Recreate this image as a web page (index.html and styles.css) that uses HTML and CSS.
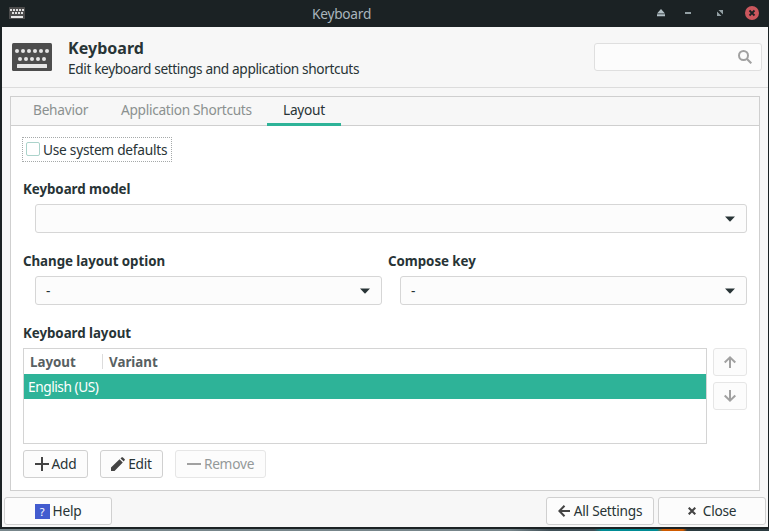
FILE: index.html
```html
<!DOCTYPE html>
<html lang="en">
<head>
<meta charset="utf-8">
<title>Keyboard</title>
<link rel="stylesheet" href="styles.css">
</head>
<body>
<div class="window">
  <header class="titlebar">
    <svg class="app-icon" width="16" height="12" viewBox="0 0 16 12"><rect width="16" height="12" rx="0.5" fill="#4d4d4d"/><path d="M1 3h14" stroke="#e0e0e0" stroke-width="2" stroke-dasharray="2 1"/><path d="M3 6h11" stroke="#e0e0e0" stroke-width="2" stroke-dasharray="2 1"/><path d="M2 10h12" stroke="#e8e8e8" stroke-width="2"/></svg>
    <div class="window-title"><span class="t-title">Keyboard</span></div>
    <div class="controls">
      <svg width="8" height="8" viewBox="0 0 8 8" fill="#b2c0c5"><path d="M4 0l4 4.5H0zM0 5.3h8v1.9H0z"/></svg>
      <svg width="6" height="8" viewBox="0 0 6 8" fill="#93a0a4"><path d="M0 3h6v2H0z"/></svg>
      <svg width="6" height="8" viewBox="0 0 6 8" fill="#93a0a4"><path d="M1.5 1H6v4.5zM0 2.5V7h4.5z"/></svg>
      <svg width="14" height="14" viewBox="0 0 14 14"><circle cx="7" cy="7" r="7" fill="#cb575d"/><path d="M4.5 4.5l5 5M9.5 4.5l-5 5" stroke="#1b2224" stroke-width="1.8"/></svg>
    </div>
  </header>
  <section class="heading">
    <svg width="40" height="28" viewBox="0 0 40 28"><rect width="40" height="28" rx="1.5" fill="#4d4d4d"/><g fill="#e6e6e6"><circle cx="5" cy="8" r="2"/><circle cx="11" cy="8" r="2"/><circle cx="17" cy="8" r="2"/><circle cx="23" cy="8" r="2"/><circle cx="29" cy="8" r="2"/><circle cx="35" cy="8" r="2"/><circle cx="8" cy="16" r="2"/><circle cx="14" cy="16" r="2"/><circle cx="20" cy="16" r="2"/><circle cx="26" cy="16" r="2"/><circle cx="32" cy="16" r="2"/><rect x="5" y="21" width="30" height="4" rx="0.5"/></g></svg>
    <div class="heading-text">
      <h1>Keyboard</h1>
      <p>Edit keyboard settings and application shortcuts</p>
    </div>
    <div class="search"><svg width="14" height="14" viewBox="0 0 14 14" fill="none" stroke="#a1a1a1"><circle cx="5.5" cy="5.5" r="4.5" stroke-width="2"/><path d="M9 9l4.3 4.3" stroke-width="2.1"/></svg></div>
  </section>
  <main class="notebook">
    <nav class="tabs">
      <div class="tab tab-behavior"><span>Behavior</span></div>
      <div class="tab tab-shortcuts"><span>Application Shortcuts</span></div>
      <div class="tab active"><span>Layout</span></div>
    </nav>
    <div class="page">
      <label class="defaults"><span class="box"></span><span>Use system defaults</span></label>
      <h2>Keyboard model</h2>
      <div class="combo indent"><span></span><svg width="10" height="6" viewBox="0 0 10 6"><path d="M0 0.5h10L5 5.8z" fill="#283436"/></svg></div>
      <div class="columns">
        <div class="column">
          <h2>Change layout option</h2>
          <div class="combo indent"><span>-</span><svg width="10" height="6" viewBox="0 0 10 6"><path d="M0 0.5h10L5 5.8z" fill="#283436"/></svg></div>
        </div>
        <div class="column">
          <h2>Compose key</h2>
          <div class="combo indent"><span>-</span><svg width="10" height="6" viewBox="0 0 10 6"><path d="M0 0.5h10L5 5.8z" fill="#283436"/></svg></div>
        </div>
      </div>
      <h2>Keyboard layout</h2>
      <div class="layouts">
        <div class="list">
          <div class="list-head"><span class="col-layout">Layout</span><span class="col-variant">Variant</span></div>
          <div class="list-row">English (US)</div>
        </div>
        <div class="order">
          <div class="button disabled"><svg width="12" height="12" viewBox="0 0 12 12" fill="none" stroke="#a1a1a1" stroke-width="2"><path d="M6 12V1.5M0.7 6.5L6 1.4l5.3 5.1"/></svg></div>
          <div class="button disabled"><svg width="12" height="12" viewBox="0 0 12 12" fill="none" stroke="#a1a1a1" stroke-width="2"><path d="M6 0v10.5M0.7 5.5L6 10.6l5.3-5.1"/></svg></div>
        </div>
      </div>
      <div class="actions">
        <div class="button add"><svg width="14" height="14" viewBox="0 0 14 14"><path d="M0 7h14M7 0v14" stroke="#444" stroke-width="2"/></svg><span>Add</span></div>
        <div class="button edit"><svg width="14" height="14" viewBox="0 0 14 14" fill="#444"><path d="M0 14v-3.5L8.5 2.3 11.8 5.6 3.5 14zM9.5 1.4L11 0Q12 0 14 2.5L12.8 4.6z"/></svg><span>Edit</span></div>
        <div class="button remove disabled"><svg width="14" height="14" viewBox="0 0 14 14"><path d="M0 7h14" stroke="#a1a1a1" stroke-width="2"/></svg><span>Remove</span></div>
      </div>
    </div>
  </main>
  <footer class="footer">
    <div class="button help"><span class="help-icon">?</span><span>Help</span></div>
    <div class="button all"><svg width="12" height="12" viewBox="0 0 12 12" fill="none" stroke="#444" stroke-width="2"><path d="M12 6H1.5M6.5 0.7L1.4 6l5.1 5.3"/></svg><span>All Settings</span></div>
    <div class="button close"><svg width="8" height="8" viewBox="0 0 8 8"><path d="M0.7 0.7l6.6 6.6M7.3 0.7L0.7 7.3" stroke="#444" stroke-width="2.1"/></svg><span>Close</span></div>
  </footer>
</div>
<div class="desktop"></div>
</body>
</html>
```

FILE: styles.css
```css
* { box-sizing: border-box; margin: 0; padding: 0; }
body {
  width: 769px; height: 531px; overflow: hidden;
  background: #1b2224; color: #283436;
  font: 13.7px/18px "Noto Sans", sans-serif;
  letter-spacing: -0.25px;
}
svg { display: block; flex: none; }
span { white-space: nowrap; }
.window {
  width: 769px; height: 529px;
  border: solid #1b2224; border-width: 0 1px 2px 2px;
  background: #f7f7f7; display: flex; flex-direction: column;
}
.titlebar {
  height: 27px; margin: 0 -1px 0 -2px; padding: 0 10px 1px 9px; flex: none;
  background: #1b2224; color: #a9b5bd; display: flex; align-items: center;
}
.window-title { flex: 1; padding-left: 287px; line-height: 24px; padding-top: 1px; }
.controls { display: flex; align-items: center; }
.controls svg:nth-child(2) { margin-left: 20px; }
.controls svg:nth-child(3) { margin-left: 26px; }
.controls svg:nth-child(4) { margin-left: 22px; }
.heading {
  height: 61px; flex: none; padding: 0 6px 0 10px;
  border-bottom: 1px solid #dcdcdc; display: flex; align-items: center; gap: 16px;
}
.heading-text { flex: 1; padding-top: 1px; }
h1 { font-size: 16px; line-height: 22px; font-weight: 700; letter-spacing: 0.05px; }
.heading-text p { line-height: 19px; letter-spacing: -0.38px; }
.search {
  width: 168px; height: 28px; margin-top: -1px; padding-right: 9px;
  border: 1px solid #dfdfdf; border-radius: 3px; background: #fcfcfc;
  display: flex; align-items: center; justify-content: flex-end;
}
.notebook {
  margin: 8px 8px 0; height: 395px; flex: none;
  border: 1px solid #cfcfcf; background: #fff;
}
.tabs {
  height: 29px; padding-left: 6px; display: flex;
  background: #f7f7f7; border-bottom: 1px solid #cfcfcf; color: #8b9190;
}
.tab { height: 29px; padding: 0 16px; line-height: 26px; }
.tab-behavior { width: 88px; }
.tab-shortcuts { width: 162px; letter-spacing: -0.3px; }
.tab.active { width: 74px; color: #283436; border-bottom: 3px solid #2eb398; }
.page { padding: 11px 12px 0; }
.defaults {
  width: 150px; height: 25px; margin-left: -1px; padding-left: 3px;
  border: 1px dotted #a5a9a9; border-radius: 1px;
  display: flex; align-items: center; gap: 3px;
}
.box { width: 14px; height: 14px; margin-top: -2px; border: 1px solid #abd3cb; border-radius: 2px; }
h2 { font-size: 13.333px; line-height: 18px; font-weight: 700; letter-spacing: -0.05px; }
.defaults + h2 { margin-top: 18px; }
.combo {
  height: 29px; margin-top: 6px; padding: 0 11px 0 10px;
  border: 1px solid #d6d6d6; border-radius: 3px; background: #fcfcfc;
  display: flex; align-items: center; justify-content: space-between;
}
.indent { margin-left: 12px; }
.columns { display: grid; grid-template-columns: 359px 359px; gap: 6px; margin: 19px 0; }
.layouts { display: flex; gap: 6px; margin-top: 6px; }
.list { flex: 1; height: 96px; border: 1px solid #d4d4d4; }
.list-head {
  height: 25px; display: flex; align-items: center;
  font-size: 13.333px; letter-spacing: 0; font-weight: 700; color: #576062;
}
.list-head span { height: 15px; line-height: 16px; }
.col-layout { width: 79px; padding-left: 6px; border-right: 1px solid #dcdcdc; }
.col-variant { padding-left: 6px; }
.list-row { height: 25px; padding-left: 4px; line-height: 26px; background: #2eb398; color: #fff; letter-spacing: -0.45px; }
.order { width: 34px; display: flex; flex-direction: column; gap: 6px; }
.button {
  height: 28px; border: 1px solid #d0d0d0; border-radius: 3px; background: #fcfcfc;
  display: flex; align-items: center; justify-content: center; gap: 3px;
}
.button.disabled { border-color: #e6e6e6; color: #949999; }
.actions { display: flex; gap: 12px; margin-top: 6px; }
.add { width: 65px; }
.edit { width: 63px; }
.remove { width: 91px; }
.footer { display: flex; gap: 4px; padding: 6px 2px 0; }
.footer .button { width: 108px; }
.help { margin-right: auto; }
.help-icon {
  width: 15px; height: 15px; background: #435ccf; color: #fff;
  font-size: 11px; line-height: 15px; text-align: center;
}
.footer .all { gap: 4px; }
.close { gap: 7px; }
.desktop {
  height: 2px;
  background: linear-gradient(90deg, #77868b 0 510px, #405057 550px 594px, #008c95 602px 657px, #d05b00 663px 683px, #2b3b40 687px);
}
```
